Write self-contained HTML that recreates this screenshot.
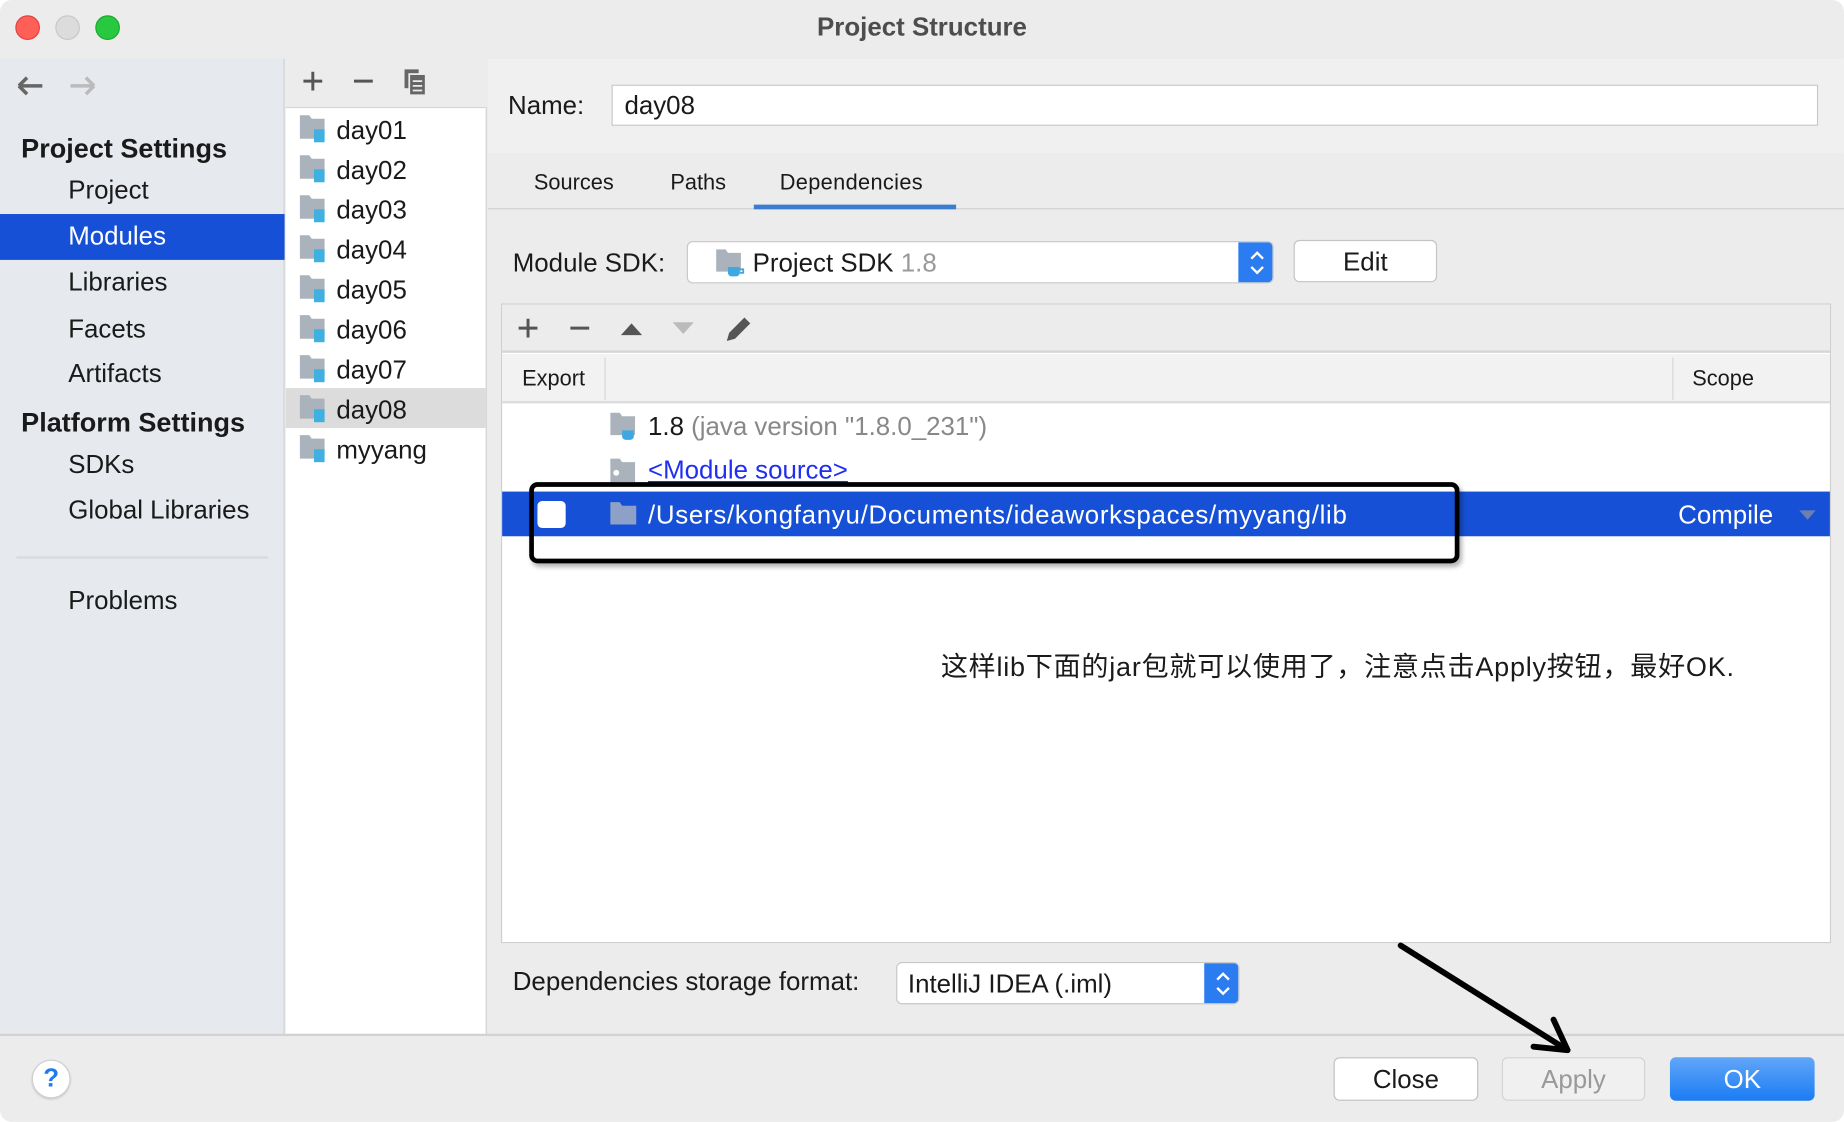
<!DOCTYPE html>
<html><head><meta charset="utf-8"><style>
*{box-sizing:border-box;margin:0;padding:0}
html,body{width:1844px;height:1122px;overflow:hidden;background:#fff}
#w{position:absolute;left:0;top:0;width:1568px;height:954px;transform:scale(1.17602);transform-origin:0 0;background:#ececec;font-family:"Liberation Sans","Noto Sans CJK SC",sans-serif;color:#1a1a1a;overflow:hidden;border-radius:10px}
.a{position:absolute}
.t{position:absolute;white-space:nowrap;line-height:1}
</style></head><body><div id="w">
<div class="a" style="left:13px;top:13px;width:21px;height:21px;border-radius:50%;background:#fe5f57;border:1px solid #e0443e"></div>
<div class="a" style="left:47px;top:13px;width:21px;height:21px;border-radius:50%;background:#dcdcdc;border:1px solid #c8c8c8"></div>
<div class="a" style="left:81px;top:13px;width:21px;height:21px;border-radius:50%;background:#28c840;border:1px solid #1aab29"></div>
<div class="t" style="left:0;width:1568px;text-align:center;top:12px;font-size:22px;font-weight:bold;color:#4d4d4d">Project Structure</div>

<div class="a" style="left:0;top:50px;width:242px;height:830px;background:#e6eaee;border-right:1px solid #d0d0d0"></div>
<svg class="a" style="left:12px;top:62px" width="90" height="22"><path d="M4 11H24M4 11L11 4M4 11L11 18" stroke="#666" stroke-width="3" fill="none"/><path d="M48 11H68M68 11L61 4M68 11L61 18" stroke="#bbb" stroke-width="3" fill="none"/></svg>
<div class="t" style="left:18px;top:115px;font-size:23px;font-weight:bold">Project Settings</div>
<div class="t" style="left:58px;top:151px;font-size:22px">Project</div>
<div class="a" style="left:0;top:182px;width:242px;height:39px;background:#1650d6"></div>
<div class="t" style="left:58px;top:190px;font-size:22px;color:#fff">Modules</div>
<div class="t" style="left:58px;top:229px;font-size:22px">Libraries</div>
<div class="t" style="left:58px;top:269px;font-size:22px">Facets</div>
<div class="t" style="left:58px;top:307px;font-size:22px">Artifacts</div>
<div class="t" style="left:18px;top:348px;font-size:23px;font-weight:bold">Platform Settings</div>
<div class="t" style="left:58px;top:384px;font-size:22px">SDKs</div>
<div class="t" style="left:58px;top:423px;font-size:22px">Global Libraries</div>
<div class="a" style="left:14px;top:473px;width:214px;height:2px;background:#d8dbdf"></div>
<div class="t" style="left:58px;top:500px;font-size:22px">Problems</div>

<div class="a" style="left:243px;top:50px;width:171px;height:42px;background:#ececec;border-bottom:1px solid #d4d4d4"></div>
<svg class="a" style="left:254px;top:58px" width="120" height="26"><path d="M4 11H20M12 3V19" stroke="#555" stroke-width="2.5"/><path d="M47 11H63" stroke="#555" stroke-width="2.5"/><rect x="90" y="1" width="12" height="16" fill="#666"/><rect x="94" y="5" width="14" height="18" fill="#666" stroke="#ececec" stroke-width="1.5"/><path d="M97 11H105M97 15H105M97 19H105" stroke="#ececec" stroke-width="1.5"/></svg>
<div class="a" style="left:243px;top:92px;width:171px;height:788px;background:#fff;border-right:1px solid #d0d0d0"></div>
<div class="a" style="left:243px;top:330px;width:170px;height:34px;background:#dcdcdc"></div>

<div class="a" style="left:415px;top:50px;width:1153px;height:80px;background:#f0f0f0"></div>
<div class="t" style="left:432px;top:79px;font-size:22px">Name:</div>
<div class="a" style="left:520px;top:72px;width:1026px;height:35px;background:#fff;border:1px solid #c8c8c8"></div>
<div class="t" style="left:531px;top:79px;font-size:22px">day08</div>
<div class="a" style="left:415px;top:177px;width:1153px;height:1px;background:#d0d0d0"></div>
<div class="t" style="left:454px;top:146px;font-size:18.5px">Sources</div>
<div class="t" style="left:570px;top:146px;font-size:18.5px">Paths</div>
<div class="t" style="left:663px;top:146px;font-size:18.5px;letter-spacing:0.3px">Dependencies</div>
<div class="a" style="left:641px;top:174px;width:172px;height:4px;background:#3c7dd0"></div>

<div class="t" style="left:436px;top:213px;font-size:22px">Module SDK:</div>
<div class="a" style="left:584px;top:205px;width:499px;height:36px;background:#fff;border:1px solid #c8c8c8;border-radius:5px;overflow:hidden"><div class="a" style="right:0;top:0;width:29px;height:36px;background:#2b7cf0"></div></div>
<svg class="a" style="left:1060px;top:208px" width="18" height="30"><path d="M4 12L9 7L14 12M4 19L9 24L14 19" stroke="#fff" stroke-width="2" fill="none"/></svg>
<svg class="a" style="left:608px;top:211px" width="26" height="26"><path d="M1 1H9L11 4H22V20H1Z" fill="#aab3bb"/><path d="M11 16H21V21A3 3 0 0 1 18 24H14A3 3 0 0 1 11 21Z" fill="#40a8e0"/><path d="M21 18H24V21H21" stroke="#40a8e0" stroke-width="1.5" fill="none"/></svg>
<div class="t" style="left:640px;top:213px;font-size:22px">Project SDK <span style="color:#999">1.8</span></div>
<div class="a" style="left:1100px;top:204px;width:122px;height:36px;background:#fff;border:1px solid #c4c4c4;border-radius:5px"></div>
<div class="t" style="left:1100px;width:122px;text-align:center;top:212px;font-size:22px">Edit</div>

<div class="a" style="left:426px;top:258px;width:1131px;height:544px;background:#fff;border:1px solid #cfcfcf"></div>
<div class="a" style="left:427px;top:259px;width:1129px;height:41px;background:#ececec;border-bottom:2px solid #d6d6d6"></div>
<svg class="a" style="left:436px;top:264px" width="210" height="30"><path d="M5 15H21M13 7V23" stroke="#555" stroke-width="2.5"/><path d="M49 15H65" stroke="#555" stroke-width="2.5"/><path d="M92 21L101 11L110 21Z" fill="#555"/><path d="M136 10L145 20L154 10Z" fill="#bbb"/><path d="M182 26L184 19L197 6L202 11L189 24Z" fill="#555"/></svg>
<div class="a" style="left:427px;top:301px;width:1129px;height:42px;background:#f2f2f2;border-bottom:2px solid #dcdcdc"></div>
<div class="a" style="left:514px;top:304px;width:1px;height:36px;background:#d6d6d6"></div>
<div class="a" style="left:1422px;top:304px;width:1px;height:36px;background:#d6d6d6"></div>
<div class="t" style="left:444px;top:313px;font-size:18.5px">Export</div>
<div class="t" style="left:1439px;top:313px;font-size:18.5px">Scope</div>

<svg class="a" style="left:518px;top:350px" width="28" height="26"><path d="M1 1H9L11 4H22V20H1Z" fill="#aab3bb"/><path d="M11 16H21V21A3 3 0 0 1 18 24H14A3 3 0 0 1 11 21Z" fill="#40a8e0"/></svg>
<div class="t" style="left:551px;top:352px;font-size:22px">1.8 <span style="color:#888">(java version "1.8.0_231")</span></div>
<svg class="a" style="left:518px;top:389px" width="26" height="24"><path d="M1 1H9L11 4H22V21H1Z" fill="#aab3bb"/><circle cx="6" cy="13" r="2.5" fill="#fff"/></svg>
<div class="t" style="left:551px;top:389px;font-size:22px;color:#1f2ef0;text-decoration:underline">&lt;Module source&gt;</div>
<div class="a" style="left:427px;top:418px;width:1129px;height:38px;background:#1650d6"></div>
<div class="a" style="left:457px;top:426px;width:24px;height:23px;background:#fff;border-radius:4px"></div>
<svg class="a" style="left:518px;top:426px" width="26" height="24"><path d="M1 1H9L11 4H23V20H1Z" fill="#8ca0c8"/></svg>
<div class="t" style="left:551px;top:427px;font-size:22px;color:#fff;letter-spacing:0.6px">/Users/kongfanyu/Documents/ideaworkspaces/myyang/lib</div>
<div class="t" style="left:1427px;top:427px;font-size:22px;color:#fff">Compile</div>
<svg class="a" style="left:1529px;top:432px" width="16" height="12"><path d="M1 2L8 10L15 2Z" fill="#6f7faa"/></svg>
<div class="a" style="left:450px;top:410px;width:791px;height:69px;border:4px solid #000;border-radius:7px;box-shadow:2px 3px 4px rgba(0,0,0,.3)"></div>

<div class="t" style="left:800px;top:556px;font-size:23px;letter-spacing:0.65px">这样lib下面的jar包就可以使用了，注意点击Apply按钮，最好OK.</div>

<div class="t" style="left:436px;top:824px;font-size:22px">Dependencies storage format:</div>
<div class="a" style="left:762px;top:818px;width:292px;height:36px;background:#fff;border:1px solid #c8c8c8;border-radius:5px;overflow:hidden"><div class="a" style="right:0;top:0;width:29px;height:36px;background:#2b7cf0"></div></div>
<svg class="a" style="left:1031px;top:821px" width="18" height="30"><path d="M4 12L9 7L14 12M4 19L9 24L14 19" stroke="#fff" stroke-width="2" fill="none"/></svg>
<div class="t" style="left:772px;top:826px;font-size:22px">IntelliJ IDEA (.iml)</div>

<div class="a" style="left:0;top:879px;width:1568px;height:2px;background:#d2d2d2"></div>
<div class="a" style="left:27px;top:901px;width:33px;height:33px;border-radius:50%;background:#fff;border:1px solid #cfcfcf;box-shadow:0 1px 2px rgba(0,0,0,.15)"></div>
<div class="t" style="left:27px;width:33px;text-align:center;top:906px;font-size:22px;font-weight:bold;color:#1f7af0">?</div>
<div class="a" style="left:1134px;top:899px;width:123px;height:37px;background:#fff;border:1px solid #c0c0c0;border-radius:5px"></div>
<div class="t" style="left:1134px;width:123px;text-align:center;top:907px;font-size:22px">Close</div>
<div class="a" style="left:1277px;top:899px;width:122px;height:37px;background:#f0f0f0;border:1px solid #d2d2d2;border-radius:5px"></div>
<div class="t" style="left:1277px;width:122px;text-align:center;top:907px;font-size:22px;color:#999">Apply</div>
<div class="a" style="left:1420px;top:899px;width:123px;height:37px;background:linear-gradient(#62a6f8,#1a7cf4);border-radius:5px"></div>
<div class="t" style="left:1420px;width:123px;text-align:center;top:907px;font-size:22px;color:#fff">OK</div>

<svg class="a" style="left:0;top:0" width="1568" height="954"><path d="M1191 804L1333 893M1304 890L1333 893L1321 867" stroke="#000" stroke-width="5" fill="none" stroke-linecap="round" stroke-linejoin="round"/></svg>

<div class="t" style="left:286px;top:94px;font-size:22px;line-height:34px">day01<br>day02<br>day03<br>day04<br>day05<br>day06<br>day07<br>day08<br>myyang</div>
<svg class="a" style="left:254px;top:96px" width="30" height="310">
<g id="f"><path d="M1 2H9L11 5H22V22H1Z" fill="#aab3bb"/><rect x="13" y="14" width="9" height="11" fill="#40b0e0"/></g>
<use href="#f" y="34"/><use href="#f" y="68"/><use href="#f" y="102"/><use href="#f" y="136"/><use href="#f" y="170"/><use href="#f" y="204"/><use href="#f" y="238"/><use href="#f" y="272"/>
</svg>
</div></body></html>
